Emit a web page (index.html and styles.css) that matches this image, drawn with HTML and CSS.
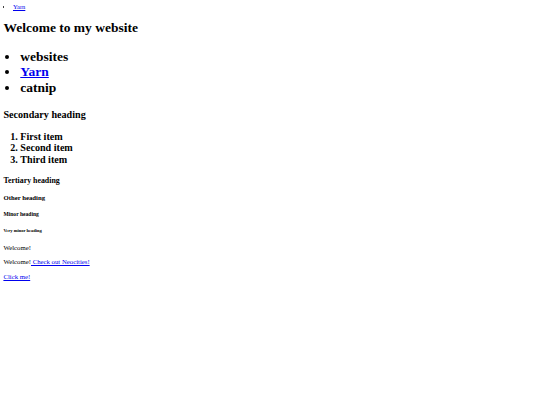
FILE: index.html
```html
<!DOCTYPE html>
<html lang="en">
<head>
  <meta charset="UTF-8">
  <title>My website</title>
  <link rel="stylesheet" href="styles.css">
</head>
<body>
  <ul class="nav">
    <li><a href="#">Yarn</a></li>
  </ul>

  <h1>Welcome to my website</h1>

  <ul class="topics">
    <li>websites</li>
    <li><a href="#">Yarn</a></li>
    <li>catnip</li>
  </ul>

  <h2>Secondary heading</h2>

  <ol class="steps">
    <li>First item</li>
    <li>Second item</li>
    <li>Third item</li>
  </ol>

  <h3>Tertiary heading</h3>
  <h4>Other heading</h4>
  <h5>Minor heading</h5>
  <h6>Very minor heading</h6>

  <p>Welcome!</p>
  <p>Welcome!<a href="#"> Check out Neocities!</a></p>
  <p><a href="#">Click me!</a></p>
</body>
</html>
```

FILE: styles.css
```css
body {
  margin: 3.4px;
  font-family: "Liberation Serif", serif;
  font-size: 6.75px;
  line-height: 1.15;
  color: black;
  background-color: white;
}

a {
  color: #0000ee;
}

ul, ol {
  padding-left: 16.9px;
}

.nav {
  margin: 0;
  padding-left: 9.6px;
  font-size: 6.5px;
}

.topics {
  font-size: 2em;
  font-weight: bold;
}

.steps {
  font-size: 1.5em;
  font-weight: bold;
}
```
